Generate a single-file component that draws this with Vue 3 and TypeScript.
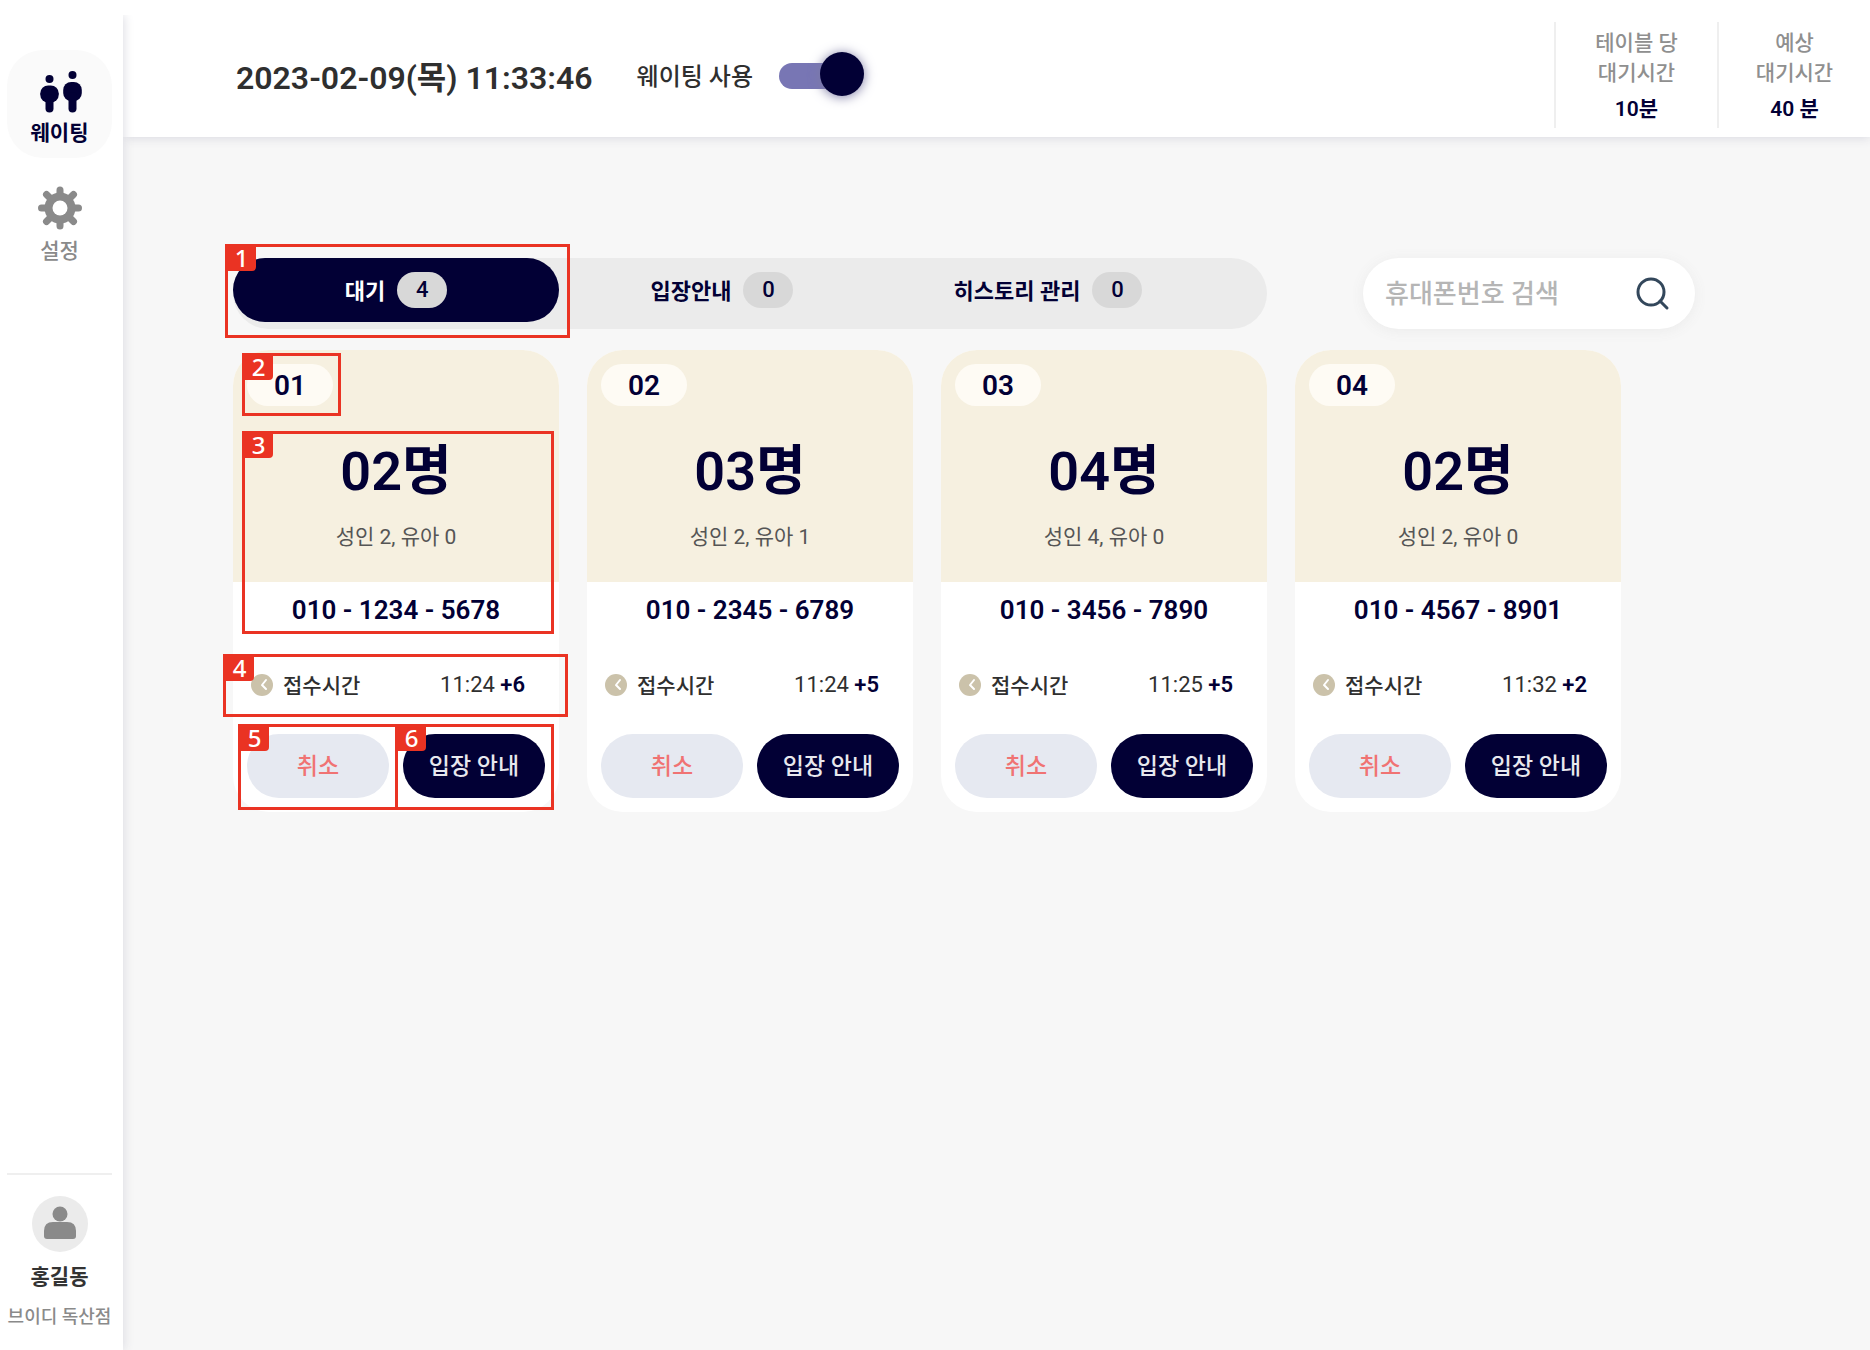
<script setup lang="ts">
import { ref } from 'vue'

interface Party {
  no: string
  people: string
  detail: string
  phone: string
  time: string
  passed: string
}

const waitingOn = ref(true)
const keyword = ref('')
const activeTab = ref(0)

const tabs = [
  { label: '대기', count: 4 },
  { label: '입장안내', count: 0 },
  { label: '히스토리 관리', count: 0 },
]

const parties: Party[] = [
  { no: '01', people: '02명', detail: '성인 2, 유아 0', phone: '010 - 1234 - 5678', time: '11:24', passed: '+6' },
  { no: '02', people: '03명', detail: '성인 2, 유아 1', phone: '010 - 2345 - 6789', time: '11:24', passed: '+5' },
  { no: '03', people: '04명', detail: '성인 4, 유아 0', phone: '010 - 3456 - 7890', time: '11:25', passed: '+5' },
  { no: '04', people: '02명', detail: '성인 2, 유아 0', phone: '010 - 4567 - 8901', time: '11:32', passed: '+2' },
]

const cardMarks = [2, 3, 4, 5, 6]
</script>

<template>
  <div class="app">
    <aside class="sidebar">
      <nav class="menu">
        <a href="#waiting" class="menu-item active">
          <svg width="44" height="44" viewBox="0 0 44 44" fill="currentColor" aria-hidden="true">
            <circle cx="11.5" cy="9" r="4" />
            <rect x="2.2" y="15.5" width="18.6" height="17" rx="8" />
            <rect x="7.5" y="24" width="8" height="18.5" rx="4" />
            <circle cx="34.5" cy="5" r="4" />
            <rect x="25.2" y="12" width="18.6" height="19" rx="8" />
            <rect x="30.5" y="22" width="8" height="20.5" rx="4" />
          </svg>
          <span>웨이팅</span>
        </a>
        <a href="#settings" class="menu-item">
          <svg width="44" height="44" viewBox="0 0 44 44" aria-hidden="true">
            <g stroke="currentColor" stroke-width="7" stroke-linecap="round">
              <path d="M22 4v36M3.500 22h37M8.500 8.500l27 27M35.500 8.500l-27 27" />
            </g>
            <circle cx="22" cy="22" r="15.500" fill="currentColor" />
            <circle cx="22" cy="22" r="7.500" fill="#fff" />
          </svg>
          <span>설정</span>
        </a>
      </nav>
      <div class="profile">
        <svg width="56" height="56" viewBox="0 0 56 56" aria-hidden="true">
          <circle cx="28" cy="28" r="28" fill="#ebebeb" />
          <circle cx="28" cy="18" r="7.500" fill="#8a8a8a" />
          <path d="M12 40v-5q0-9 9-9h14q9 0 9 9v5q0 3-3 3H15q-3 0-3-3z" fill="#8a8a8a" />
        </svg>
        <strong>홍길동</strong>
        <span>브이디 독산점</span>
      </div>
    </aside>

    <div class="content">
      <header class="topbar">
        <time class="clock" datetime="2023-02-09T11:33:46">2023-02-09(목) 11:33:46</time>
        <label class="switch">
          <span>웨이팅 사용</span>
          <input v-model="waitingOn" type="checkbox" role="switch" />
        </label>
        <dl class="stats">
          <div class="stat">
            <dt>테이블 당<br />대기시간</dt>
            <dd>10분</dd>
          </div>
          <div class="stat">
            <dt>예상<br />대기시간</dt>
            <dd>40 분</dd>
          </div>
        </dl>
      </header>

      <main class="board">
        <div class="toolbar">
          <div class="tabs" role="tablist">
            <button
              v-for="(tab, i) in tabs"
              :key="tab.label"
              type="button"
              role="tab"
              class="tab"
              :class="{ selected: i === activeTab }"
              :aria-selected="i === activeTab"
              @click="activeTab = i"
            >
              <span class="tab-label">{{ tab.label }}</span>
              <span class="count">{{ tab.count }}</span>
            </button>
            <div class="mark mark-1"><span>1</span></div>
          </div>
          <form class="search" @submit.prevent>
            <input v-model="keyword" type="text" placeholder="휴대폰번호 검색" aria-label="휴대폰번호 검색" />
            <button type="submit" aria-label="검색">
              <svg width="36" height="36" viewBox="0 0 36 36" fill="none" stroke="#33475b" stroke-width="3" stroke-linecap="round" aria-hidden="true">
                <circle cx="16" cy="16" r="13" />
                <path d="M25 25l7 7" />
              </svg>
            </button>
          </form>
        </div>

        <section class="cards">
          <article v-for="(p, i) in parties" :key="p.no" class="card">
            <div class="card-head">
              <span class="number">{{ p.no }}</span>
              <strong class="people">{{ p.people }}</strong>
              <span class="detail">{{ p.detail }}</span>
            </div>
            <div class="phone">{{ p.phone }}</div>
            <div class="received">
              <svg width="22" height="22" viewBox="0 0 22 22" aria-hidden="true">
                <circle cx="11" cy="11" r="11" fill="#cbc2aa" />
                <path d="M15 6l-4 5 4 4" fill="none" stroke="#fff" stroke-width="2" stroke-linecap="round" stroke-linejoin="round" />
              </svg>
              <span class="received-label">접수시간</span>
              <span>{{ p.time }} <b>{{ p.passed }}</b></span>
            </div>
            <div class="actions">
              <button type="button" class="cancel">취소</button>
              <button type="button" class="enter">입장 안내</button>
            </div>
            <template v-if="i === 0">
              <div v-for="m in cardMarks" :key="m" class="mark" :class="`mark-${m}`"><span>{{ m }}</span></div>
            </template>
          </article>
        </section>
      </main>
    </div>
  </div>
</template>

<style>
body {
  margin: 0;
  background: #fff;
}
</style>

<style scoped>
.app {
  box-sizing: border-box;
  display: flex;
  min-height: 100vh;
  padding-top: 15px;
  color: #2f2f2f;
  font-family: Roboto, 'Noto Sans CJK KR', sans-serif;
  font-size: 21px;
  line-height: 30px;
}

.app *,
.app *::before {
  box-sizing: border-box;
}

button,
input {
  margin: 0;
  border: 0;
  padding: 0;
  font: inherit;
  color: inherit;
}

button {
  cursor: pointer;
}

.sidebar {
  position: relative;
  z-index: 2;
  display: flex;
  flex-direction: column;
  justify-content: space-between;
  flex: none;
  width: 123px;
  padding: 35px 11px 18px 7px;
  background: #fff;
  box-shadow: 1px 0 10px #dcdce3;
  clip-path: inset(0 -16px 0 0);
}

.menu {
  display: flex;
  flex-direction: column;
  gap: 8px;
}

.menu-item {
  display: flex;
  flex-direction: column;
  align-items: center;
  gap: 6px;
  height: 108px;
  padding-top: 20px;
  border-radius: 36px;
  color: #8a8a8a;
  font-weight: 500;
  text-decoration: none;
}

.menu-item.active {
  gap: 4px;
  background: #fafafa;
  color: #020035;
  font-weight: 700;
}

.profile {
  display: flex;
  flex-direction: column;
  align-items: center;
  border-top: 2px solid #efefef;
  padding-top: 21px;
  color: #333;
}

.profile strong {
  margin: 10px 0;
  font-weight: 700;
}

.profile span {
  color: #8a8a8a;
  font-size: 18px;
  font-weight: 500;
  white-space: nowrap;
}

.content {
  display: flex;
  flex-direction: column;
  flex: 1;
  min-width: 0;
}

.topbar {
  position: relative;
  z-index: 1;
  display: flex;
  align-items: center;
  height: 122px;
  padding-left: 113px;
  background: #fff;
  box-shadow: 0 1px 10px #d8d8e0;
  clip-path: inset(0 0 -16px 0);
}

.clock {
  padding-top: 4px;
  font-size: 32px;
  font-weight: 600;
}

.switch {
  display: flex;
  align-items: center;
  gap: 26px;
  margin-left: 44px;
  font-size: 24px;
  font-weight: 500;
}

.switch span {
  padding-top: 2px;
}

.switch input {
  position: relative;
  appearance: none;
  width: 82px;
  height: 26px;
  border-radius: 13px;
  background: #7876b4;
  cursor: pointer;
}

.switch input::before {
  content: '';
  position: absolute;
  top: -11px;
  left: 0;
  width: 44px;
  height: 44px;
  border-radius: 50%;
  background: #020035;
  box-shadow: 0 1px 12px #7d7ba4;
}

.switch input:checked::before {
  left: 41px;
}

.stats {
  display: flex;
  align-self: stretch;
  margin: 7px 0 9px auto;
}

.stat {
  display: flex;
  flex-direction: column;
  gap: 6px;
  width: 163px;
  border-left: 2px solid #efefef;
  padding-top: 6px;
  text-align: center;
}

.stat:last-child {
  width: 153px;
}

.stat dt {
  color: #8f8f8f;
  font-weight: 500;
}

.stat dd {
  margin: 0;
  color: #020035;
  font-weight: 600;
}

.board {
  flex: 1;
  padding: 121px 110px;
  background: #f7f7f7;
}

.toolbar {
  display: flex;
  align-items: flex-start;
  gap: 96px;
}

.tabs {
  position: relative;
  display: flex;
  width: 1034px;
  height: 71px;
  border-radius: 36px;
  background: #ebebeb;
}

.tab {
  display: flex;
  align-items: center;
  justify-content: center;
  gap: 12px;
  width: 326px;
  height: 64px;
  border-radius: 32px;
  background: none;
  color: #020035;
  font-size: 22px;
  font-weight: 700;
}

.tab.selected {
  background: #020035;
  color: #fff;
}

.tab-label {
  padding-top: 4px;
}

.count {
  width: 50px;
  height: 36px;
  border-radius: 18px;
  background: #d8d8d8;
  color: #020035;
  font-weight: 500;
  line-height: 36px;
}

.search {
  display: flex;
  align-items: center;
  justify-content: space-between;
  width: 332px;
  height: 71px;
  border-radius: 36px;
  padding: 0 24px 0 22px;
  background: #fff;
  box-shadow: 0 2px 14px #ebebeb;
}

.search input {
  width: 220px;
  background: none;
  outline: 0;
  font-size: 26px;
}

.search input::placeholder {
  color: #b5b5b5;
  opacity: 1;
  font-weight: 500;
}

.search button {
  display: flex;
  background: none;
}

.cards {
  display: grid;
  grid-template-columns: repeat(auto-fill, 326px);
  gap: 28px;
  margin-top: 21px;
}

.card {
  position: relative;
  border-radius: 36px;
  background: #fff;
}

.card-head {
  display: flex;
  flex-direction: column;
  align-items: center;
  height: 232px;
  border-radius: 36px 36px 0 0;
  padding: 14px;
  background: #f6f0e0;
}

.number {
  align-self: flex-start;
  width: 86px;
  height: 42px;
  border-radius: 21px;
  background: #fefbf4;
  color: #020035;
  font-size: 28px;
  font-weight: 600;
  line-height: 44px;
  text-align: center;
}

.people {
  margin-top: 36px;
  color: #020035;
  font-size: 54px;
  font-weight: 600;
  line-height: 60px;
}

.detail {
  margin-top: 20px;
  color: #555;
}

.phone {
  padding-top: 13px;
  color: #020035;
  font-size: 26px;
  font-weight: 600;
  text-align: center;
}

.received {
  display: flex;
  align-items: center;
  margin-top: 44px;
  padding: 0 34px 0 18px;
  font-size: 22px;
}

.received-label {
  flex: 1;
  padding: 2px 0 0 10px;
  font-size: 21px;
  font-weight: 500;
}

.received b {
  color: #020035;
  font-weight: 600;
}

.actions {
  display: flex;
  gap: 14px;
  padding: 33px 14px 14px;
}

.actions button {
  flex: 1;
  height: 64px;
  border-radius: 32px;
  padding-top: 2px;
  font-size: 23px;
  font-weight: 500;
}

.cancel {
  background: #e6e9f1;
  color: #f07373;
}

.enter {
  background: #020035;
  color: #e8e8ee;
}

/* Numbered call-outs laid over the screen */
.mark {
  position: absolute;
  border: 3px solid #ea3323;
  pointer-events: none;
}

.mark span {
  position: absolute;
  top: -3px;
  left: -3px;
  width: 31px;
  height: 27px;
  border-radius: 0 0 4px 0;
  padding-left: 2px;
  background: #ea3323;
  color: #fff;
  font-family: 'Noto Sans', sans-serif;
  font-size: 24px;
  font-weight: 500;
  line-height: 27px;
  text-align: center;
}

.mark-1 {
  top: -14px;
  left: -8px;
  width: 345px;
  height: 94px;
}

.mark-2 {
  top: 3px;
  left: 9px;
  width: 99px;
  height: 63px;
}

.mark-3 {
  top: 81px;
  left: 9px;
  width: 312px;
  height: 203px;
}

.mark-4 {
  top: 304px;
  left: -10px;
  width: 345px;
  height: 63px;
}

.mark-5 {
  top: 374px;
  left: 5px;
  width: 160px;
  height: 86px;
}

.mark-6 {
  top: 374px;
  left: 162px;
  width: 159px;
  height: 86px;
}
</style>
